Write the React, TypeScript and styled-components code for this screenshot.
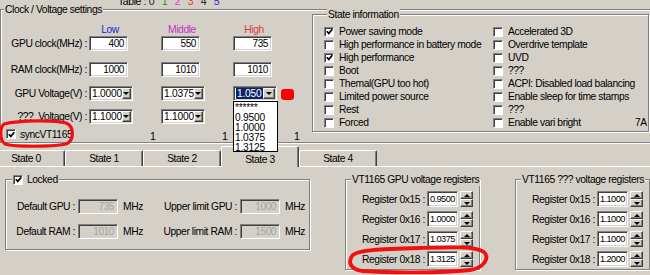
import React from "react";
import styled, { createGlobalStyle, css } from "styled-components";

const FACE = "#d4d0c8";
const UI = "'Liberation Sans', Arial, sans-serif";

const Global = createGlobalStyle`
  html, body { margin: 0; padding: 0; background: ${FACE}; }
  body { font-family: ${UI}; font-size: 10.3px; letter-spacing: -0.42px; color: #000; }
  * { box-sizing: border-box; }
`;

const Page = styled.div`
  position: relative;
  width: 650px;
  height: 275px;
  overflow: hidden;
  background: ${FACE};
`;

/* ---------- table selector ---------- */
const TableRow = styled.div`
  height: 7px;
  margin-bottom: -4px;
  display: flex;
  align-items: flex-end;
  padding-left: 118px;
  line-height: 12px;
  font-size: 10.5px;
  white-space: nowrap;
`;
const TableLabel = styled.span`
  width: 27px;
`;
const TableNum = styled.span<{ $c: string }>`
  width: 13px;
  text-align: center;
  color: ${(p) => p.$c};
`;

/* ---------- group boxes ---------- */
const Group = styled.fieldset`
  margin: 0;
  padding: 0;
  min-width: 0;
  border: 1px solid #808080;
  box-shadow: inset 1px 1px 0 #fff, 1px 1px 0 #fff;
`;
const Legend = styled.legend<{ $ml: number }>`
  margin-left: ${(p) => p.$ml}px;
  padding: 0 1px;
  height: 13px;
  line-height: 13px;
  background: ${FACE};
  display: flex;
  align-items: center;
  gap: 4px;
  white-space: nowrap;
`;

const OuterGroup = styled(Group)`
  width: 660px;
  height: 140px;
  display: flex;
  align-items: flex-start;
`;

/* ---------- clock / voltage grid ---------- */
const ClockPanel = styled.div`
  width: 311px;
  padding-top: 8px;
  display: flex;
  flex-direction: column;
`;
const ClockRow = styled.div<{ $h: number; $mt: number }>`
  display: grid;
  grid-template-columns: 88px 72px 72px 72px;
  align-items: center;
  height: ${(p) => p.$h}px;
  margin-top: ${(p) => p.$mt}px;
`;
const RowLabel = styled.span`
  text-align: right;
  padding-right: 2px;
  white-space: pre;
`;
const Head = styled.span<{ $c: string }>`
  width: 42px;
  text-align: center;
  color: ${(p) => p.$c};
`;
const Cell = styled.div`
  position: relative;
  display: flex;
  align-items: center;
`;

const sunken = css`
  border: 1px solid;
  border-color: #808080 #fff #fff #808080;
  box-shadow: inset 1px 1px 0 #404040, inset -1px -1px 0 ${FACE};
`;
const raised = css`
  background: ${FACE};
  border: 1px solid;
  border-color: #fff #404040 #404040 #fff;
  box-shadow: inset -1px -1px 0 #808080;
`;

const Field = styled.div<{ $w?: number; $h?: number; $disabled?: boolean; $spin?: boolean }>`
  ${sunken};
  width: ${(p) => p.$w ?? 39}px;
  height: ${(p) => p.$h ?? 15}px;
  background: ${(p) => (p.$disabled ? FACE : "#fff")};
  color: ${(p) => (p.$disabled ? "#a3a3a3" : "#000")};
  text-align: ${(p) => (p.$spin ? "left" : "right")};
  padding: ${(p) => (p.$spin ? "0 0 0 2px" : "0 3px 0 2px")};
  line-height: ${(p) => (p.$h ?? 15) - 1}px;
  font-size: ${(p) => (p.$spin ? 9.2 : 10)}px;
  letter-spacing: ${(p) => (p.$spin ? -0.55 : -0.4)}px;
  white-space: nowrap;
  overflow: hidden;
`;

const Combo = styled.div`
  ${sunken};
  position: relative;
  width: 44px;
  height: 15px;
  padding: 1px;
  background: #fff;
  display: flex;
  align-items: center;
`;
const ComboText = styled.span`
  flex: 1;
  padding-left: 1px;
  font-size: 10.2px;
  letter-spacing: -0.2px;
  line-height: 11px;
`;
const Sel = styled.span`
  background: #0a246a;
  color: #fff;
  padding: 0 1px;
`;
const ComboBtn = styled.span`
  ${raised};
  width: 12px;
  height: 11px;
  display: flex;
  align-items: center;
  justify-content: center;
  &::after {
    content: "";
    border-left: 3px solid transparent;
    border-right: 3px solid transparent;
    border-top: 3px solid #000;
  }
`;
const DropList = styled.div`
  position: absolute;
  left: -1px;
  top: 14px;
  width: 45px;
  height: 51px;
  z-index: 5;
  background: #fff;
  border: 1px solid #000;
  padding: 1px 0 0 1px;
  font-size: 10.2px;
  letter-spacing: -0.2px;
  line-height: 10px;
`;
const RedMark = styled.span`
  position: absolute;
  left: 47px;
  top: 2px;
  width: 13px;
  height: 11px;
  border-radius: 3px;
  background: #f00;
`;
const One = styled.span`
  padding-left: 61px;
  font-size: 10.5px;
  padding-top: 4px;
`;

/* ---------- checkbox ---------- */
const Box = styled.span`
  width: 10px;
  height: 10px;
  flex: none;
  display: inline-flex;
  align-items: center;
  justify-content: center;
  background: #fff;
  border: 1px solid;
  border-color: #808080 #fff #fff #808080;
  box-shadow: inset 1px 1px 0 #404040;
`;
function Check({ checked }: { checked?: boolean }) {
  return (
    <Box>
      {checked && (
        <svg width="7" height="7" viewBox="0 0 7 7">
          <path d="M0.8 3.2 L2.8 5.4 L6.3 1.2" stroke="#000" strokeWidth="1.7" fill="none" />
        </svg>
      )}
    </Box>
  );
}
const CheckLine = styled.label<{ $pl?: number }>`
  display: flex;
  align-items: center;
  gap: 4px;
  padding-left: ${(p) => p.$pl ?? 0}px;
  white-space: nowrap;
`;

/* ---------- state information ---------- */
const StateGroup = styled(Group)`
  width: 337px;
  margin-top: -8px;
  padding: 4px 1px 2px 11px;
  display: flex;
`;
const StateCol = styled.div<{ $w?: number }>`
  display: flex;
  flex-direction: column;
  width: ${(p) => (p.$w ? `${p.$w}px` : "auto")};
  flex: ${(p) => (p.$w ? "none" : "1")};
`;
const StateItem = styled.label`
  height: 13px;
  display: flex;
  align-items: center;
  gap: 5px;
  white-space: nowrap;
`;
const Code = styled.span`
  align-self: flex-end;
  line-height: 12px;
  padding-right: 1px;
`;

/* ---------- tabs ---------- */
const TabStrip = styled.div`
  position: relative;
  z-index: 1;
  display: flex;
  align-items: flex-start;
  height: 20px;
  margin: 3px 0 0 -13px;
`;
const Tab = styled.div<{ $active?: boolean }>`
  width: 78px;
  flex: none;
  text-align: center;
  border: 1px solid;
  border-bottom: none;
  border-color: #fff #404040 transparent #fff;
  box-shadow: inset -1px 0 0 #808080;
  border-radius: 2px 2px 0 0;
  background: ${FACE};
  ${(p) =>
    p.$active
      ? css`
          height: 21px;
          padding-top: 6px;
          line-height: 14px;
        `
      : css`
          margin-top: 4px;
          height: 16px;
          line-height: 15px;
        `}
`;

const Panel = styled.div`
  margin-left: -13px;
  border-top: 1px solid #fff;
  border-left: 1px solid #fff;
  padding: 6px 0 0 17px;
  display: flex;
  align-items: flex-start;
  gap: 35px;
`;

/* ---------- locked group ---------- */
const LockedGroup = styled(Group)`
  width: 305px;
  padding: 13px 0 10px 0;
  display: flex;
  flex-direction: column;
  gap: 10px;
`;
const LockRow = styled.div`
  display: grid;
  grid-template-columns: 72px 40px 23px 99px 40px auto;
  align-items: center;
  height: 15px;
  white-space: nowrap;
`;
const LockLabel = styled.span`
  text-align: right;
  padding-right: 3px;
`;
const Unit = styled.span`
  padding-left: 5px;
`;

/* ---------- register groups ---------- */
const RegGroup = styled(Group)`
  width: 135px;
  padding: 5px 0 2px 0;
  display: flex;
  flex-direction: column;
  gap: 4px;
`;
const RegRow = styled.div`
  display: flex;
  align-items: center;
  height: 16px;
  padding-right: 6px;
`;
const RegLabel = styled.span`
  flex: 1;
  text-align: right;
  padding-right: 2px;
  white-space: nowrap;
`;
const Spin = styled.div`
  width: 13px;
  height: 16px;
  margin-left: 2px;
  flex: none;
  display: flex;
  flex-direction: column;
`;
const SpinBtn = styled.span<{ $up?: boolean }>`
  ${raised};
  flex: 1;
  display: flex;
  align-items: center;
  justify-content: center;
  &::after {
    content: "";
    border-left: 3px solid transparent;
    border-right: 3px solid transparent;
    ${(p) =>
      p.$up ? "border-bottom: 3px solid #000;" : "border-top: 3px solid #000;"}
  }
`;

/* ---------- annotations ---------- */
const Marks = styled.svg`
  position: absolute;
  left: 0;
  top: 0;
  pointer-events: none;
  z-index: 10;
`;

const TABLE = [
  { n: "0", c: "#222" },
  { n: "1", c: "#1e8a1e" },
  { n: "2", c: "#d23cd2" },
  { n: "3", c: "#e23a3a" },
  { n: "4", c: "#111" },
  { n: "5", c: "#2f2fd2" },
];

const LEFT_STATES: [string, boolean][] = [
  ["Power saving mode", true],
  ["High performance in battery mode", false],
  ["High performance", true],
  ["Boot", false],
  ["Themal(GPU too hot)", false],
  ["Limited power source", false],
  ["Rest", false],
  ["Forced", false],
];
const RIGHT_STATES = [
  "Accelerated 3D",
  "Overdrive template",
  "UVD",
  "???",
  "ACPI: Disabled load balancing",
  "Enable sleep for time stamps",
  "???",
  "Enable vari bright",
];

function ComboBox({ value, selected, children }: { value: string; selected?: boolean; children?: React.ReactNode }) {
  return (
    <Combo>
      <ComboText>{selected ? <Sel>{value}</Sel> : value}</ComboText>
      <ComboBtn />
      {children}
    </Combo>
  );
}

function RegisterGroup({ title, values }: { title: string; values: string[] }) {
  const regs = ["0x15", "0x16", "0x17", "0x18"];
  return (
    <RegGroup>
      <Legend $ml={5}>{title}</Legend>
      {regs.map((r, i) => (
        <RegRow key={r}>
          <RegLabel>Register {r} :</RegLabel>
          <Field $w={31} $h={16} $spin>
            {values[i]}
          </Field>
          <Spin>
            <SpinBtn $up />
            <SpinBtn />
          </Spin>
        </RegRow>
      ))}
    </RegGroup>
  );
}

export default function App() {
  return (
    <>
      <Global />
      <Page>
        <TableRow>
          <TableLabel>Table :</TableLabel>
          {TABLE.map((t) => (
            <TableNum key={t.n} $c={t.c}>
              {t.n}
            </TableNum>
          ))}
        </TableRow>

        <OuterGroup>
          <Legend $ml={3}>Clock / Voltage settings</Legend>
          <ClockPanel>
            <ClockRow $h={11} $mt={0}>
              <span />
              <Head $c="#2626cf">Low</Head>
              <Head $c="#c234c2">Middle</Head>
              <Head $c="#e03a3a">High</Head>
            </ClockRow>
            <ClockRow $h={15} $mt={1}>
              <RowLabel>GPU clock(MHz) :</RowLabel>
              <Cell><Field>400</Field></Cell>
              <Cell><Field>550</Field></Cell>
              <Cell><Field>735</Field></Cell>
            </ClockRow>
            <ClockRow $h={15} $mt={11}>
              <RowLabel>RAM clock(MHz) :</RowLabel>
              <Cell><Field>1000</Field></Cell>
              <Cell><Field>1010</Field></Cell>
              <Cell><Field>1010</Field></Cell>
            </ClockRow>
            <ClockRow $h={15} $mt={9}>
              <RowLabel>GPU Voltage(V) :</RowLabel>
              <Cell><ComboBox value="1.0000" /></Cell>
              <Cell><ComboBox value="1.0375" /></Cell>
              <Cell>
                <ComboBox value="1.050" selected>
                  <DropList>
                    <div>******</div>
                    <div>0.9500</div>
                    <div>1.0000</div>
                    <div>1.0375</div>
                    <div>1.3125</div>
                  </DropList>
                  <RedMark />
                </ComboBox>
              </Cell>
            </ClockRow>
            <ClockRow $h={15} $mt={8}>
              <RowLabel>{"???  Voltage(V) :"}</RowLabel>
              <Cell><ComboBox value="1.1000" /></Cell>
              <Cell><ComboBox value="1.1000" /></Cell>
              <span />
            </ClockRow>
            <ClockRow $h={12} $mt={2}>
              <CheckLine $pl={5}>
                <Check checked />
                syncVT1165
              </CheckLine>
              <One>1</One>
              <One>1</One>
              <One>1</One>
            </ClockRow>
          </ClockPanel>

          <StateGroup>
            <Legend $ml={3}>State information</Legend>
            <StateCol $w={169}>
              {LEFT_STATES.map(([label, on]) => (
                <StateItem key={label}>
                  <Check checked={on} />
                  {label}
                </StateItem>
              ))}
            </StateCol>
            <StateCol>
              {RIGHT_STATES.map((label, i) => (
                <StateItem key={i}>
                  <Check />
                  {label}
                </StateItem>
              ))}
            </StateCol>
            <Code>7A</Code>
          </StateGroup>
        </OuterGroup>

        <TabStrip>
          <Tab>State 0</Tab>
          <Tab>State 1</Tab>
          <Tab>State 2</Tab>
          <Tab $active>State 3</Tab>
          <Tab>State 4</Tab>
        </TabStrip>

        <Panel>
          <LockedGroup>
            <Legend $ml={6}>
              <Check checked />
              Locked
            </Legend>
            <LockRow>
              <LockLabel>Default GPU :</LockLabel>
              <Field $w={40} $disabled>735</Field>
              <Unit>MHz</Unit>
              <LockLabel>Upper limit GPU :</LockLabel>
              <Field $w={40} $disabled>1000</Field>
              <Unit>MHz</Unit>
            </LockRow>
            <LockRow>
              <LockLabel>Default RAM :</LockLabel>
              <Field $w={40} $disabled>1010</Field>
              <Unit>MHz</Unit>
              <LockLabel>Upper limit RAM :</LockLabel>
              <Field $w={40} $disabled>1500</Field>
              <Unit>MHz</Unit>
            </LockRow>
          </LockedGroup>

          <RegisterGroup
            title="VT1165 GPU voltage registers"
            values={["0.9500", "1.0000", "1.0375", "1.3125"]}
          />
          <RegisterGroup
            title="VT1165 ??? voltage registers"
            values={["1.1000", "1.1000", "1.1000", "1.2000"]}
          />
        </Panel>

        <Marks width="650" height="275" viewBox="0 0 650 275">
          <path
            d="M4 124 C20 120 55 120 66 123 C74 126 75 140 66 144 C50 147 15 147 5 144 C0 141 -1 128 4 124 Z"
            fill="none"
            stroke="#f01010"
            strokeWidth="3.2"
          />
          <path
            d="M352 256 C356 250 380 249 420 248 C450 247 475 246 484 252 C490 258 484 268 470 270 C440 273 390 273 362 271 C350 269 348 262 352 256 Z"
            fill="none"
            stroke="#f01010"
            strokeWidth="3.8"
          />
        </Marks>
      </Page>
    </>
  );
}
